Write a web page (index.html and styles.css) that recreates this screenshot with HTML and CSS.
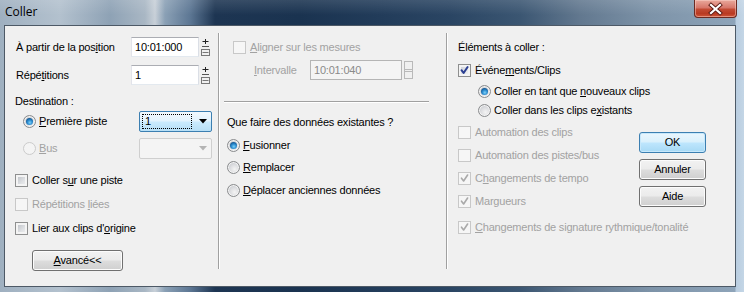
FILE: index.html
```html
<!DOCTYPE html>
<html lang="fr">
<head>
<meta charset="utf-8">
<title>Coller</title>
<link rel="stylesheet" href="styles.css">
</head>
<body>
<div class="win">
  <div class="titlebar">
    <span class="title">Coller</span>
    <div class="close">
      <svg width="43" height="18" viewBox="0 0 43 18">
        <path d="M17 5 L26 13 M26 5 L17 13" stroke="#5a1a14" stroke-width="4" stroke-linecap="square" fill="none"/>
        <path d="M17 5 L26 13 M26 5 L17 13" stroke="#ffffff" stroke-width="2.2" stroke-linecap="square" fill="none"/>
      </svg>
    </div>
  </div>
  <div class="client">
    <div class="col col-left">
      <div class="row r-in1">
        <span class="lbl lbl-in">À partir de la pos<u>i</u>tion</span>
        <span class="input">10:01:000</span>
        <span class="spin"><svg width="9" height="20" viewBox="0 0 9 20"><path d="M1.5 4.5 H7.5 M4.5 2 V7" stroke="#222" stroke-width="1" fill="none"/><path d="M1 9.5 H8" stroke="#555"/><path d="M1 12.5 H8 M1.5 15.5 H7.5 M1 18.5 H8 M0.5 12 V19 M8.5 12 V19" stroke="#777" stroke-width="1" fill="none"/></svg></span>
      </div>
      <div class="row r-in2">
        <span class="lbl lbl-in">Répé<u>t</u>itions</span>
        <span class="input">1</span>
        <span class="spin"><svg width="9" height="20" viewBox="0 0 9 20"><path d="M1.5 4.5 H7.5 M4.5 2 V7" stroke="#222" stroke-width="1" fill="none"/><path d="M1 9.5 H8" stroke="#555"/><path d="M1 12.5 H8 M1.5 15.5 H7.5 M1 18.5 H8 M0.5 12 V19 M8.5 12 V19" stroke="#777" stroke-width="1" fill="none"/></svg></span>
      </div>
      <div class="row r-dest"><span class="lbl">Destination :</span></div>
      <div class="row r-combo">
        <span class="opt opt-combo"><span class="rb on"></span><span class="lbl"><u>P</u>remière piste</span></span>
        <span class="combo focus"><span class="focusbox">1</span><svg class="arrow" width="8" height="5" viewBox="0 0 8 5"><path d="M0 0 H8 L4 4.5 Z" fill="#000"/></svg></span>
      </div>
      <div class="row r-combo r-bus">
        <span class="opt opt-combo"><span class="rb dis"></span><span class="lbl dim"><u>B</u>us</span></span>
        <span class="combo dis"><svg class="arrow" width="8" height="5" viewBox="0 0 8 5"><path d="M0 0 H8 L4 4.5 Z" fill="#b4b4b4"/></svg></span>
      </div>
      <div class="cbrows">
        <div class="row r-cb"><span class="cb"></span><span class="lbl">Coller s<u>u</u>r une piste</span></div>
        <div class="row r-cb"><span class="cb dis"></span><span class="lbl dim">Répétitions <u>l</u>iées</span></div>
        <div class="row r-cb"><span class="cb"></span><span class="lbl">Lier aux clips d'<u>o</u>rigine</span></div>
      </div>
      <div class="btn btn-adv"><span><u>A</u>vancé&lt;&lt;</span></div>
    </div>
    <div class="vsep"></div>
    <div class="col col-mid">
      <div class="row m-align"><span class="cb dis"></span><span class="lbl dim"><u>A</u>ligner sur les mesures</span></div>
      <div class="row m-int">
        <span class="lbl dim lbl-int"><u>I</u>ntervalle</span>
        <span class="input dis">10:01:040</span>
        <span class="spin"><svg width="9" height="20" viewBox="0 0 9 20"><path d="M0.5 1.5 H8.5 M0.5 9.5 H8.5 M0.5 11.5 H8.5 M0.5 18.5 H8.5 M0.5 1 V19 M8.5 1 V19" stroke="#b9b9b9" stroke-width="1" fill="none"/></svg></span>
      </div>
      <div class="hsep"></div>
      <div class="row m-q"><span class="lbl">Que faire des données existantes ?</span></div>
      <div class="row m-r1"><span class="rb on"></span><span class="lbl"><u>F</u>usionner</span></div>
      <div class="row m-r2"><span class="rb"></span><span class="lbl"><u>R</u>emplacer</span></div>
      <div class="row m-r2"><span class="rb"></span><span class="lbl"><u>D</u>éplacer anciennes données</span></div>
    </div>
    <div class="vsep"></div>
    <div class="col col-right">
      <div class="row x-head"><span class="lbl">Éléments à coller :</span></div>
      <div class="row x-ev"><span class="cb checked"><svg width="11" height="11" viewBox="0 0 11 11"><path d="M2.5 5.2 L4.6 8 L8.6 2" stroke="#2b3f91" stroke-width="2" fill="none" stroke-linecap="round" stroke-linejoin="round"/></svg></span><span class="lbl">Événe<u>m</u>ents/Clips</span></div>
      <div class="row x-r1 sub"><span class="rb on"></span><span class="lbl">Coller en tant que <u>n</u>ouveaux clips</span></div>
      <div class="row x-r2 sub"><span class="rb"></span><span class="lbl">Coller dans les clips e<u>x</u>istants</span></div>
      <div class="x-split">
        <div class="x-list">
          <div class="row x-cb"><span class="cb dis"></span><span class="lbl dim">Automation des clips</span></div>
          <div class="row x-cb"><span class="cb dis"></span><span class="lbl dim">Automation des pistes/bus</span></div>
          <div class="row x-cb"><span class="cb dis checked"><svg width="11" height="11" viewBox="0 0 11 11"><path d="M2.5 5.2 L4.6 8 L8.6 2" stroke="#a9a9a9" stroke-width="1.6" fill="none" stroke-linecap="round" stroke-linejoin="round"/></svg></span><span class="lbl dim">C<u>h</u>angements de tempo</span></div>
          <div class="row x-cb"><span class="cb dis checked"><svg width="11" height="11" viewBox="0 0 11 11"><path d="M2.5 5.2 L4.6 8 L8.6 2" stroke="#a9a9a9" stroke-width="1.6" fill="none" stroke-linecap="round" stroke-linejoin="round"/></svg></span><span class="lbl dim">Margueurs</span></div>
        </div>
        <div class="x-btns">
          <div class="btn btn-def"><span>OK</span></div>
          <div class="btn"><span>Annuler</span></div>
          <div class="btn"><span>Aide</span></div>
        </div>
      </div>
      <div class="row x-sig"><span class="cb dis checked"><svg width="11" height="11" viewBox="0 0 11 11"><path d="M2.5 5.2 L4.6 8 L8.6 2" stroke="#a9a9a9" stroke-width="1.6" fill="none" stroke-linecap="round" stroke-linejoin="round"/></svg></span><span class="lbl dim"><u>C</u>hangements de signature rythmique/tonalité</span></div>
    </div>
  </div>
</div>
</body>
</html>
```

FILE: styles.css
```css
* { box-sizing: border-box; }
html, body { margin: 0; padding: 0; }
body {
  width: 744px;
  height: 292px;
  overflow: hidden;
  font-family: "Liberation Sans", Arial, sans-serif;
  font-size: 11px;
  letter-spacing: -0.2px;
  color: #000;
  background: linear-gradient(90deg,
    #9fb0c0 0px, #b3c1ce 60px, #8ea2b5 110px, #a9b7c4 145px, #c8d0d8 155px,
    #8aa0b5 165px, #5d7794 190px, #1d3552 215px, #1a3350 300px, #223c5a 380px,
    #2a4563 450px, #3b5672 520px, #62788f 580px, #7d93a8 650px, #8ea4b9 735px,
    #b9cde0 736px, #c4d6e6 744px);
}
.win { width: 744px; height: 292px; display: flex; flex-direction: column; }
.titlebar {
  height: 25px;
  display: flex;
  justify-content: space-between;
  align-items: flex-start;
  background: linear-gradient(180deg, rgba(255,255,255,0.12), rgba(255,255,255,0) 60%);
}
.title {
  font-family: "Open Sans", "Noto Sans", sans-serif;
  font-size: 12px;
  letter-spacing: 0;
  line-height: 16px;
  padding: 4px 0 0 5px;
  color: #000;
}
.close {
  width: 43px;
  height: 18px;
  margin-right: 7px;
  border: 1px solid #6b2a22;
  border-top: none;
  border-radius: 0 0 4px 4px;
  background: linear-gradient(180deg, #e9a99c 0%, #d7776a 45%, #c24a33 55%, #b93a22 80%, #d0563a 100%);
  box-shadow: inset 0 0 0 1px rgba(255,220,210,0.45);
  position: relative;
}
.close svg { position: absolute; left: -1px; top: 0; }

.client {
  margin: 0 8px 5px 4px;
  width: 732px;
  height: 262px;
  background: #f0f0f0;
  border: 1px solid #4d5966;
  display: flex;
}
.col { display: flex; flex-direction: column; }
.col-left { width: 213px; padding: 11px 0 0 10px; }
.col-mid { width: 226px; padding: 11px 0 0 4px; }
.col-right { width: 287px; padding: 11px 0 0 10px; }
.vsep {
  width: 2px;
  margin: 7px 0 17px 0;
  border-left: 1px solid #a0a0a0;
  border-right: 1px solid #ffffff;
}
.hsep {
  width: 205px;
  height: 2px;
  border-top: 1px solid #a0a0a0;
  border-bottom: 1px solid #ffffff;
  margin-top: 21px;
}
.row { display: flex; align-items: center; white-space: nowrap; }
.lbl { line-height: 13px; }
.dim { color: #a2a2a2; }
u { text-underline-offset: 1px; }

/* left */
.r-in1 { height: 20px; }
.r-in2 { height: 20px; margin-top: 8px; }
.lbl-in { width: 116px; padding-left: 1px; }
.r-dest { height: 20px; margin-top: 6px; }
.r-combo { height: 21px; }
.r-bus { margin-top: 6px; }
.opt { display: flex; align-items: center; }
.opt-combo { width: 124px; padding-left: 8px; }
.cbrows { margin-top: 9px; }
.r-cb { height: 24px; }
.btn-adv { width: 91px; margin: 10px 0 0 17px; }

.input {
  width: 68px;
  height: 20px;
  background: #fff;
  border: 1px solid #abadb3;
  border-color: #abadb3 #dbdfe6 #e3e9ef #e2e3ea;
  padding: 0 0 0 3px;
  display: flex;
  align-items: center;
  line-height: 13px;
}
.input.dis {
  width: 92px;
  background: #f4f4f4;
  border: 1px solid #b5b5b5;
  color: #8a8a8a;
}
.spin { margin-left: 2px; width: 9px; height: 20px; display: block; }
.spin svg { display: block; }

.combo {
  width: 73px;
  height: 21px;
  border: 1px solid #3c7fb1;
  border-radius: 2px;
  background: linear-gradient(180deg, #f2f9fe 0%, #e3f3fd 45%, #c9eafd 55%, #b7dff6 100%);
  position: relative;
  display: flex;
  align-items: center;
}
.combo.dis {
  border-color: #cfcfcf;
  background: #f4f4f4;
}
.focusbox {
  margin-left: 2px;
  width: 50px;
  height: 15px;
  border: 1px dotted #000;
  padding-left: 2px;
  line-height: 13px;
}
.arrow { position: absolute; right: 4px; top: 7px; }

/* mid */
.m-align { height: 20px; padding-left: 9px; }
.m-int { height: 20px; margin-top: 3px; padding-left: 30px; }
.lbl-int { width: 56px; }
.m-q { height: 20px; margin-top: 9px; padding-left: 3px; }
.m-r1 { height: 22px; margin-top: 2px; padding-left: 3px; }
.m-r2 { height: 23px; padding-left: 3px; }

/* right */
.x-head { height: 20px; }
.x-ev { height: 26px; }
.x-r1 { height: 16px; }
.x-r2 { height: 22px; }
.sub { padding-left: 20px; }
.x-split { display: flex; }
.x-list { width: 181px; }
.x-cb { height: 23px; }
.x-btns { display: flex; flex-direction: column; gap: 6px; padding-top: 11px; }
.x-btns .btn { width: 67px; }
.x-sig { height: 24px; margin-top: 2px; }

/* checkbox */
.cb {
  width: 13px;
  height: 13px;
  flex: none;
  margin-right: 4px;
  border: 1px solid #8e8f8f;
  background: linear-gradient(135deg, #b7bbc1 0%, #dfe1e4 60%, #f3f3f3 100%);
  box-shadow: inset 0 0 0 2px #f4f4f4;
  position: relative;
}
.cb.dis {
  border-color: #c8c8c8;
  background: #f6f6f6;
  box-shadow: inset 0 0 0 2px #f6f6f6;
}
.cb.checked svg { position: absolute; left: 0; top: 0; }
.x-ev .cb { background: linear-gradient(135deg, #c6ccd4 0%, #e6e8eb 60%, #f6f6f6 100%); }

/* radio */
.rb {
  width: 13px;
  height: 13px;
  flex: none;
  margin-right: 3px;
  border-radius: 50%;
  border: 1px solid #8a8c8e;
  background: radial-gradient(circle at 60% 65%, #f4f4f4 0%, #dcdde0 45%, #b9bcc1 100%);
  box-shadow: inset 0 0 0 1px #f4f4f4;
  position: relative;
}
.rb.on::after {
  content: "";
  position: absolute;
  left: 2px;
  top: 2px;
  width: 7px;
  height: 7px;
  border-radius: 50%;
  background: radial-gradient(circle at 55% 65%, #7fd1f6 0%, #2c8cd0 40%, #0f4d86 80%, #0a3a6a 100%);
}
.rb.dis {
  border-color: #cbcbcb;
  background: #f4f4f4;
  box-shadow: none;
}

/* buttons */
.btn {
  height: 21px;
  border: 1px solid #707070;
  border-radius: 3px;
  background: linear-gradient(180deg, #f2f2f2 0%, #ebebeb 48%, #dddddd 52%, #cfcfcf 100%);
  box-shadow: inset 0 0 0 1px #fcfcfc;
  display: flex;
  align-items: center;
  justify-content: center;
  line-height: 13px;
}
.btn-def {
  border-color: #3c7fb1;
  background: linear-gradient(180deg, #eaf6fd 0%, #d9f0fc 48%, #bee6fd 52%, #a7d9f5 100%);
  box-shadow: inset 0 0 0 1px #c7e8fb;
}
```
